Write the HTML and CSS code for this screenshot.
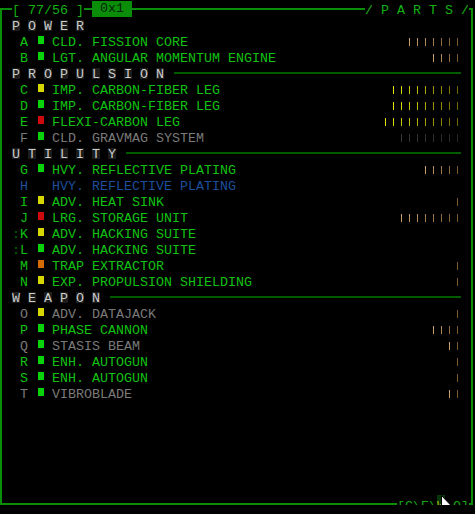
FILE: index.html
```html
<!DOCTYPE html>
<html lang="en">

<head>
    <meta charset="UTF-8">
    <title>Parts</title>
    <link rel="stylesheet" href="styles.css">
</head>

<body>
    <div class="panel">
        <!-- top frame with counters -->
        <div class="titlebar">
            <span class="seg seg-start"></span>
            <span class="title-count">[ 77/56 ]</span>
            <span class="seg seg-short"></span>
            <span class="title-tag">0x1</span>
            <span class="seg seg-fill"></span>
            <span class="title-name">/ P A R T S /</span>
            <span class="seg seg-corner"></span>
        </div>

        <!-- Power -->
        <div class="group-head">
            <span class="hl">P</span><span class="hl">O</span><span class="hl">W</span><span class="hl">E</span><span class="hl">R</span>
        </div>
        <div class="row" data-bars="7" data-tone="tan"><span class="pre"></span><span class="key">A</span><span class="sq-cell"><span class="sq sq-green"></span></span><span class="name">Cld. Fission Core</span><span class="bars"></span></div>
        <div class="row" data-bars="4" data-tone="tan"><span class="pre"></span><span class="key">B</span><span class="sq-cell"><span class="sq sq-green"></span></span><span class="name">Lgt. Angular Momentum Engine</span><span class="bars"></span></div>

        <!-- Propulsion -->
        <div class="group-head">
            <span class="hl">P</span><span class="hl">R</span><span class="hl">O</span><span class="hl">P</span><span class="hl">U</span><span class="hl">L</span><span class="hl">S</span><span class="hl">I</span><span class="hl">O</span><span class="hl">N</span><span class="head-rule"></span>
        </div>
        <div class="row" data-bars="9" data-tone="yellow"><span class="pre"></span><span class="key">C</span><span class="sq-cell"><span class="sq sq-yellow"></span></span><span class="name">Imp. Carbon-fiber Leg</span><span class="bars"></span></div>
        <div class="row" data-bars="9" data-tone="yellow"><span class="pre"></span><span class="key">D</span><span class="sq-cell"><span class="sq sq-green"></span></span><span class="name">Imp. Carbon-fiber Leg</span><span class="bars"></span></div>
        <div class="row" data-bars="10" data-tone="yellow"><span class="pre"></span><span class="key">E</span><span class="sq-cell"><span class="sq sq-red"></span></span><span class="name">Flexi-carbon Leg</span><span class="bars"></span></div>
        <div class="row row-off" data-bars="8" data-tone="gray"><span class="pre"></span><span class="key">F</span><span class="sq-cell"><span class="sq sq-green"></span></span><span class="name">Cld. Gravmag System</span><span class="bars"></span></div>

        <!-- Utility -->
        <div class="group-head">
            <span class="hl">U</span><span class="hl">T</span><span class="hl">I</span><span class="hl">L</span><span class="hl">I</span><span class="hl">T</span><span class="hl">Y</span><span class="head-rule"></span>
        </div>
        <div class="row" data-bars="5" data-tone="tan"><span class="pre"></span><span class="key">G</span><span class="sq-cell"><span class="sq sq-green"></span></span><span class="name">Hvy. Reflective Plating</span><span class="bars"></span></div>
        <div class="row row-blue" data-bars="0"><span class="pre"></span><span class="key">H</span><span class="sq-cell"></span><span class="name">Hvy. Reflective Plating</span><span class="bars"></span></div>
        <div class="row" data-bars="1" data-tone="tan"><span class="pre"></span><span class="key">I</span><span class="sq-cell"><span class="sq sq-yellow"></span></span><span class="name">Adv. Heat Sink</span><span class="bars"></span></div>
        <div class="row" data-bars="8" data-tone="tan"><span class="pre"></span><span class="key">J</span><span class="sq-cell"><span class="sq sq-red"></span></span><span class="name">Lrg. Storage Unit</span><span class="bars"></span></div>
        <div class="row" data-bars="0"><span class="pre">:</span><span class="key">K</span><span class="sq-cell"><span class="sq sq-yellow"></span></span><span class="name">Adv. Hacking Suite</span><span class="bars"></span></div>
        <div class="row" data-bars="0"><span class="pre">:</span><span class="key">L</span><span class="sq-cell"><span class="sq sq-green"></span></span><span class="name">Adv. Hacking Suite</span><span class="bars"></span></div>
        <div class="row" data-bars="1" data-tone="tan"><span class="pre"></span><span class="key">M</span><span class="sq-cell"><span class="sq sq-orange"></span></span><span class="name">Trap Extractor</span><span class="bars"></span></div>
        <div class="row" data-bars="1" data-tone="tan"><span class="pre"></span><span class="key">N</span><span class="sq-cell"><span class="sq sq-yellow"></span></span><span class="name">Exp. Propulsion Shielding</span><span class="bars"></span></div>

        <!-- Weapon -->
        <div class="group-head">
            <span class="hl">W</span><span class="hl">E</span><span class="hl">A</span><span class="hl">P</span><span class="hl">O</span><span class="hl">N</span><span class="head-rule"></span>
        </div>
        <div class="row row-off" data-bars="1" data-tone="tan"><span class="pre"></span><span class="key">O</span><span class="sq-cell"><span class="sq sq-yellow"></span></span><span class="name">Adv. Datajack</span><span class="bars"></span></div>
        <div class="row" data-bars="4" data-tone="tan"><span class="pre"></span><span class="key">P</span><span class="sq-cell"><span class="sq sq-green"></span></span><span class="name">Phase Cannon</span><span class="bars"></span></div>
        <div class="row row-off" data-bars="2" data-tone="tan"><span class="pre"></span><span class="key">Q</span><span class="sq-cell"><span class="sq sq-green"></span></span><span class="name">Stasis Beam</span><span class="bars"></span></div>
        <div class="row" data-bars="1" data-tone="tan"><span class="pre"></span><span class="key">R</span><span class="sq-cell"><span class="sq sq-green"></span></span><span class="name">Enh. Autogun</span><span class="bars"></span></div>
        <div class="row" data-bars="1" data-tone="tan"><span class="pre"></span><span class="key">S</span><span class="sq-cell"><span class="sq sq-green"></span></span><span class="name">Enh. Autogun</span><span class="bars"></span></div>
        <div class="row row-off" data-bars="2" data-tone="tan"><span class="pre"></span><span class="key">T</span><span class="sq-cell"><span class="sq sq-green"></span></span><span class="name">Vibroblade</span><span class="bars"></span></div>

        <!-- mode switch on the bottom frame -->
        <div class="modes">[C\E\<span class="mode-on">W</span>\Q]</div>
        <svg class="cursor" width="12" height="19" viewBox="0 0 12 19">
            <path d="M0.5 0.5 L0.5 15.5 L4 12 L6.5 17.5 L8.5 16.5 L6 11 L10.5 11 Z" fill="#fff" stroke="#000" stroke-width="1" />
        </svg>
    </div>

    <script>
        // integrity ticks, bright on the left and dim to the right
        const tones = {
            tan: [[196, 158, 104], [122, 88, 42]],
            yellow: [[232, 228, 0], [112, 102, 0]],
            gray: [[56, 56, 56], [38, 38, 38]]
        };

        document.querySelectorAll('.row').forEach(row => {
            const n = parseInt(row.dataset.bars);
            const tone = tones[row.dataset.tone];
            const box = row.querySelector('.bars');
            for (let i = 0; i < n; i++) {
                const t = n > 1 ? (n - 1 - i) / (n - 1) : 0;
                const c = tone[1].map((v, k) => Math.round(v + (tone[0][k] - v) * t));
                const bar = document.createElement('span');
                bar.className = 'bar';
                bar.style.background = `rgb(${c.join(',')})`;
                box.appendChild(bar);
            }
        });
    </script>
</body>

</html>
```

FILE: styles.css
```css
/* Parts panel */

body {
    margin: 0;
    background: #000;
    color: #12c012;
    font-family: "Liberation Mono", "DejaVu Sans Mono", monospace;
    font-size: 13.333px;
    line-height: 16px;
    overflow: hidden;
}

.panel {
    display: flow-root;
    position: relative;
    box-sizing: border-box;
    height: 497px;
    margin: 8px 2px 0 0;
    border: 2px solid #0a8e0a;
    border-top: none;
}

/* top frame */

.titlebar {
    display: flex;
    height: 16px;
    margin: -5px -2px 0 -2px;
    white-space: pre;
}

.seg {
    height: 2px;
    margin-top: 5px;
    background: #0a8e0a;
}

.seg-start {
    width: 12px;
}

.seg-short {
    width: 8px;
}

.seg-fill {
    flex: 1;
}

.seg-corner {
    width: 4px;
}

.title-count,
.title-name {
    color: #12b012;
}

.title-tag {
    height: 16px;
    margin-top: -2px;
    padding: 0 8px;
    background: #0a8e0a;
    color: #022402;
}

/* section headers */

.group-head {
    display: flex;
    height: 16px;
    padding: 0 10px 0 10px;
}

.hl {
    width: 8px;
    height: 11px;
    margin-top: 1px;
    margin-right: 8px;
    line-height: 14px;
    background: #1c1c1c;
    color: #cbcbcb;
    text-align: center;
}

.head-rule {
    flex: 1;
    height: 2px;
    margin: 5px 0 0 2px;
    background: #005a00;
}

/* part rows */

.row {
    display: flex;
    height: 16px;
    padding: 0 13px 0 10px;
    white-space: pre;
}

.pre {
    width: 8px;
    color: #046604;
}

.key {
    width: 8px;
    margin-right: 8px;
}

.sq-cell {
    display: flex;
    justify-content: flex-end;
    width: 8px;
    margin-right: 8px;
}

.sq {
    width: 6px;
    height: 8px;
    margin-top: 1px;
}

.sq-green {
    background: #0ad20a;
}

.sq-yellow {
    background: #d6d600;
}

.sq-red {
    background: #d00a0a;
}

.sq-orange {
    background: #d86a06;
}

.name {
    flex: 1;
    text-transform: uppercase;
}

.row-off .key,
.row-off .name {
    color: #7a7a7a;
}

.row-blue .key,
.row-blue .name {
    color: #1c4f9c;
}

.bars {
    display: flex;
    align-items: flex-start;
}

.bar {
    width: 1px;
    height: 8px;
    margin: 3px 0 0 7px;
}

/* bottom frame */

.modes {
    position: absolute;
    right: 2px;
    bottom: -12px;
    height: 16px;
    background: #000;
    color: #12a612;
    white-space: pre;
}

.mode-on {
    display: inline-block;
    height: 18px;
    margin-top: -4px;
    padding-top: 4px;
    background: #073807;
    color: #a8b400;
    vertical-align: top;
}

.cursor {
    position: absolute;
    left: 439px;
    bottom: -11px;
}
```
